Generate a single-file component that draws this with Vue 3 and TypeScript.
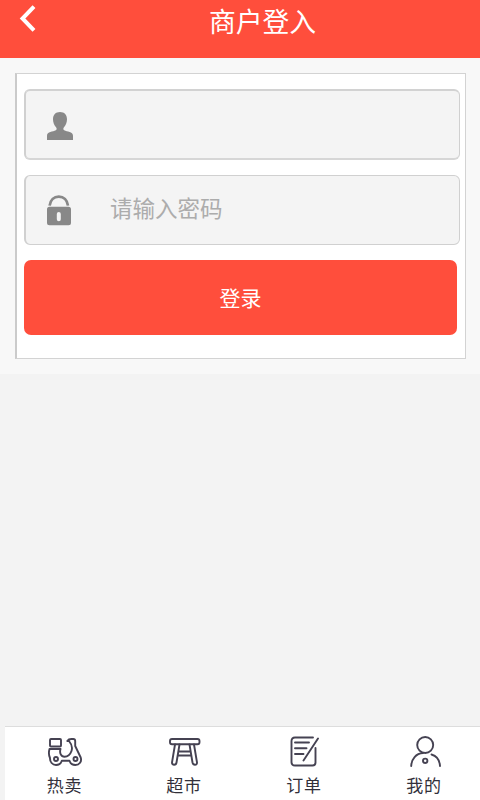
<script setup lang="ts">
import { ref } from 'vue'

const account = ref('')
const password = ref('')

type TabIcon = 'scooter' | 'stool' | 'order' | 'person'
interface Tab {
  icon: TabIcon
  label: string
}

const tabs: Tab[] = [
  { icon: 'scooter', label: '热卖' },
  { icon: 'stool', label: '超市' },
  { icon: 'order', label: '订单' },
  { icon: 'person', label: '我的' },
]
</script>

<template>
  <div class="page">
    <header class="header">
      <svg class="back" viewBox="0 0 20 30">
        <path d="M16 2.700 L4.500 14.500 L16 26.300" />
      </svg>
      <h1 class="title">商户登入</h1>
    </header>

    <main class="content">
      <form class="card" @submit.prevent>
        <label class="field field-account">
          <svg class="field-icon" viewBox="0 0 28 32">
            <path d="M14 2C9.600 2 7 4.800 7 9.200C7 12.300 8.200 15.600 10.200 17.400C10.900 18.200 10.800 19.700 9.800 20.300C7 22 1 21.500 1 25.700V30H27V25.700C27 21.500 21 22 18.200 20.300C17.200 19.700 17.100 18.200 17.800 17.400C19.800 15.600 21 12.300 21 9.200C21 4.800 18.400 2 14 2Z" />
          </svg>
          <input v-model="account" class="input" type="text" />
        </label>
        <label class="field">
          <svg class="field-icon" viewBox="0 0 28 32">
            <path class="shackle" d="M3.600 10.700C4.300 5 8 1.600 12.800 1.600S21.300 5 22 10.700" />
            <path fill-rule="evenodd" d="M3.500 11.800H22.500Q25 11.800 25 14.300V27.700Q25 30.200 22.500 30.200H3.500Q1 30.200 1 27.700V14.300Q1 11.800 3.500 11.800ZM12.800 17Q10.800 17 10.800 19V24.200Q10.800 26.200 12.800 26.200T14.800 24.200V19Q14.800 17 12.800 17Z" />
          </svg>
          <input v-model="password" class="input" type="password" placeholder="请输入密码" />
        </label>
        <button class="submit" type="submit">登录</button>
      </form>
    </main>

    <nav class="tabs">
      <a v-for="tab in tabs" :key="tab.icon" class="tab">
        <svg class="tab-icon" viewBox="0 0 40 34">
          <g v-if="tab.icon === 'scooter'">
            <rect x="6" y="5" width="11" height="7.500" rx="1" />
            <path d="M16.500 15H5.500C4.500 18.500 4.600 21 6 24C5.800 28 8.500 31 12 31C15 31 17 29.300 17.800 26.800H25.500C26.300 29.300 28.500 31 31.300 31C35.500 31 38 27.500 36.700 23.500L31.200 12V7Q31.200 5 29.300 5H27.500Q24.500 5 23.300 7H25C28 10.500 28.500 14 27.500 17C26.200 20.700 24 22.700 20.500 22.700C17 22.700 15.300 19 16.500 15" />
            <circle cx="12" cy="25" r="2" />
            <circle cx="31.500" cy="25" r="2" />
          </g>
          <g v-else-if="tab.icon === 'stool'">
            <rect x="6" y="5" width="29.500" height="5.300" rx="2" />
            <path d="M11 10.500L8 28.500Q8 30.700 10.200 30.700Q12.200 30.700 12.500 28.500L15.500 10.500M25.500 10.500L28.500 28.500Q29 30.700 31 30.700Q33.200 30.700 33 28.500L30 10.500M15 17.500H26.500M14.500 21.500H27" />
          </g>
          <g v-else-if="tab.icon === 'order'">
            <path d="M29 3.500H11Q7.500 3.500 7.500 7V28Q7.500 31.500 11 31.500H28.500Q31.500 31.500 31.500 28.500V14M34 4.500L19.500 26.500M11 8.500H25M11 14.200H22.500M11 20H19.500" />
          </g>
          <g v-else>
            <circle cx="21.200" cy="11" r="8" />
            <path d="M7.200 32C7.500 25 12 19.500 19 19M27.500 20.500C32.500 22 35.700 26.500 36 32" />
            <circle cx="21.200" cy="26.800" r="2.200" />
          </g>
        </svg>
        <span class="tab-label">{{ tab.label }}</span>
      </a>
    </nav>
  </div>
</template>

<style>
body {
  background: #f3f3f3;
}
</style>

<style scoped>
.page,
.page * {
  box-sizing: border-box;
}
.page {
  display: flex;
  flex-direction: column;
  width: 480px;
  height: 800px;
  overflow: hidden;
  background: #f3f3f3;
  font-family: "Noto Sans CJK SC", sans-serif;
}
.header {
  display: grid;
  grid-template-columns: 45px 1fr;
  height: 58px;
  flex: none;
  background: #ff4e3c;
}
.back {
  width: 20px;
  height: 30px;
  margin: 4px 0 0 18px;
  fill: none;
  stroke: #fff;
  stroke-width: 4;
}
.title {
  margin: 1px 0 0;
  color: #fff;
  text-align: center;
  font-size: 26.800px;
  font-weight: 400;
  line-height: 40px;
}
.content {
  flex: none;
  height: 316px;
  padding: 15px 14px 0 15px;
  background: #f8f8f8;
}
.card {
  display: flex;
  flex-direction: column;
  gap: 15px;
  height: 286px;
  padding: 15px 5px 0 7px;
  background: #fff;
  border: 1px solid #d3d3d3;
  border-left: 2px solid #cbcbcb;
}
.field {
  display: flex;
  height: 70px;
  flex: none;
  padding: 19px 12px 0 20px;
  background: #f4f4f4;
  border: 1px solid #d0d0d0;
  border-left-width: 2px;
  border-radius: 6px;
}
.field-account {
  height: 71px;
  border-top: 2px solid #d2d2d2;
  border-bottom: 2px solid #d6d6d6;
}
.field-icon {
  width: 28px;
  height: 32px;
  flex: none;
  fill: #888;
}
.shackle {
  fill: none;
  stroke: #888;
  stroke-width: 2.700;
}
.input {
  width: 320px;
  height: 30px;
  margin: -3px 0 0 36px;
  padding: 0;
  background: transparent;
  border: 0;
  outline: 0;
  color: #555;
  font: 22.500px/30px "Noto Sans CJK SC", sans-serif;
}
.input::placeholder {
  color: #acacac;
  opacity: 1;
}
.submit {
  width: 433px;
  height: 75px;
  flex: none;
  padding: 0;
  background: #ff4e3c;
  border: 0;
  border-radius: 7px;
  color: #fff;
  font: 400 21px/75px "Noto Sans CJK SC", sans-serif;
}
.tabs {
  display: grid;
  grid-template-columns: 119px 120px 120px 120px;
  height: 74px;
  margin: auto 0 0 5px;
  overflow: hidden;
  background: #fff;
  border-top: 1px solid #ddd;
}
.tab {
  display: flex;
  flex-direction: column;
  align-items: center;
  padding-top: 7px;
}
.tab-icon {
  width: 40px;
  height: 34px;
  margin-left: -1px;
  fill: none;
  stroke: #454252;
  stroke-width: 1.900;
  stroke-linejoin: round;
  stroke-linecap: round;
}
.tab-label {
  margin-top: 5px;
  color: #32303a;
  font-size: 17px;
  line-height: 24px;
  letter-spacing: 0.800px;
}
</style>
